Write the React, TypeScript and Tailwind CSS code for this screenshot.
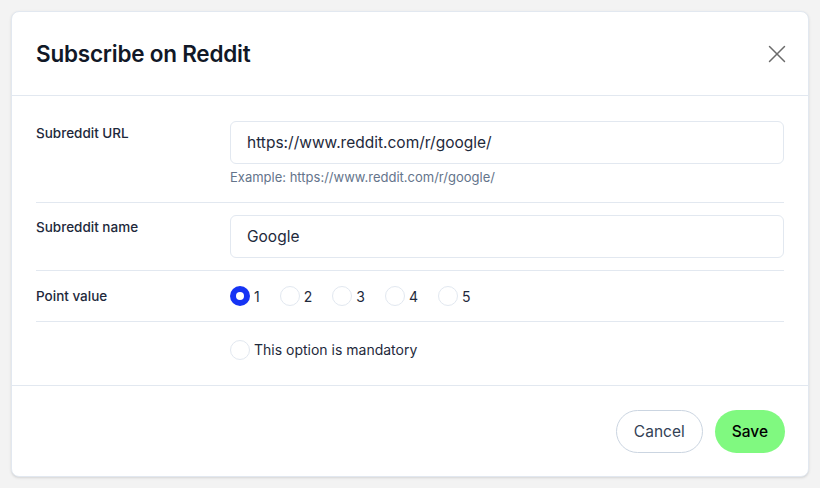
import { X } from 'lucide-react';

const points = [1, 2, 3, 4, 5];

function Radio({ checked }: { checked?: boolean }) {
  return checked ? (
    <span className="flex h-5 w-5 items-center justify-center rounded-full bg-[#1634f4]">
      <span className="h-2 w-2 rounded-full bg-white" />
    </span>
  ) : (
    <span className="h-5 w-5 rounded-full border border-[#e2e8f0] bg-white" />
  );
}

export default function App() {
  return (
    <div className="min-h-[488px] bg-[#f3f3f3] p-[11px] font-['Inter',sans-serif] text-[#1e293b]">
      <div className="rounded-lg border border-[#e2e8f0] bg-white shadow-sm">
        {/* Header */}
        <div className="flex h-[84px] items-center justify-between border-b border-[#e2e8f0] pl-6 pr-4">
          <h2 className="text-[22.5px] font-semibold tracking-[-0.01em] text-[#111827]">Subscribe on Reddit</h2>
          <X size={30} className="text-[#6b6b6b]" strokeWidth={1.15} />
        </div>

        {/* Body */}
        <div className="px-6">
          <div className="flex border-b border-[#e2e8f0] pb-[17px] pt-[25px]">
            <p className="mt-[2px] w-[194px] shrink-0 text-[13.5px] font-medium">Subreddit URL</p>
            <div className="flex-1">
              <div className="flex h-[43px] items-center rounded-md border border-[#e2e8f0] px-4 text-[15.5px]">
                https://www.reddit.com/r/google/
              </div>
              <p className="mt-[5px] text-[13px] leading-4 text-[#64748b]">Example: https://www.reddit.com/r/google/</p>
            </div>
          </div>

          <div className="flex border-b border-[#e2e8f0] py-[12px]">
            <p className="mt-[2px] w-[194px] shrink-0 text-[13.5px] font-medium">Subreddit name</p>
            <div className="flex h-[43px] flex-1 items-center rounded-md border border-[#e2e8f0] px-4 text-[15.5px]">
              Google
            </div>
          </div>

          <div className="flex h-[51px] items-center border-b border-[#e2e8f0]">
            <p className="w-[194px] shrink-0 text-[13.5px] font-medium">Point value</p>
            <div className="flex items-center gap-[20px]">
              {points.map((p) => (
                <label key={p} className="flex items-center gap-[4px] text-[14px]">
                  <Radio checked={p === 1} />
                  <span>{p}</span>
                </label>
              ))}
            </div>
          </div>

          <div className="flex h-[63px] items-start pt-[17px]">
            <div className="w-[194px] shrink-0" />
            <label className="flex items-center gap-[4px] text-[14px]">
              <Radio />
              <span>This option is mandatory</span>
            </label>
          </div>
        </div>

        {/* Footer */}
        <div className="flex justify-end gap-3 border-t border-[#e2e8f0] pb-[23px] pl-6 pr-[23px] pt-[24px]">
          <button className="h-[43px] rounded-full border border-[#cbd5e1] px-[17px] text-[15.5px] text-[#334155]">Cancel</button>
          <button className="h-[43px] rounded-full bg-[#80f980] px-[17px] text-[15.5px] font-medium text-black">Save</button>
        </div>
      </div>
    </div>
  );
}
